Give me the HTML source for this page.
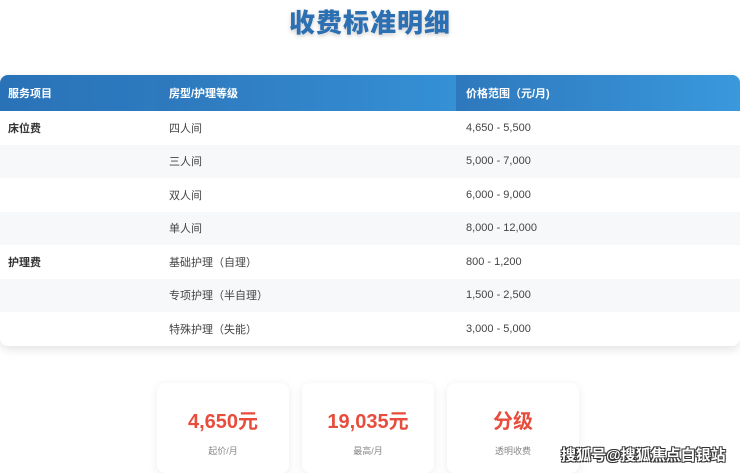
<!DOCTYPE html>
<html><head><meta charset="utf-8"><style>
*{margin:0;padding:0;box-sizing:border-box}
body{width:740px;height:469px;overflow:hidden;background:#fff;font-family:"Liberation Sans","Noto Sans CJK SC",sans-serif;position:relative}
h1{position:absolute;top:3px;left:0;width:740px;text-align:center;font-size:26px;font-weight:900;color:#2d6fb3;text-shadow:0 2px 4px rgba(0,0,0,.2);letter-spacing:1px}
.tbl{position:absolute;top:75px;left:0;width:740px;border-radius:8px;box-shadow:0 3px 10px rgba(0,0,0,.12);overflow:hidden;background:#fff}
.row{display:flex;height:33.5px;align-items:center;font-size:11px;color:#444}
.row.hd{height:36px;background:linear-gradient(90deg,#2a72b8,#3898dc);color:#fff;font-weight:bold;font-size:11px}
.row.hd div:nth-child(2){background:linear-gradient(90deg,#2e78bd,#3590d5)}
.row.hd div:nth-child(3){background:linear-gradient(90deg,#2e78bd,#3a98dc)}
.hd div{height:100%;display:flex;align-items:center}
.c1{width:158px;padding-left:8px;font-weight:bold;color:#333}
.hd .c1{color:#fff}
.c2{width:298px;padding-left:11px}
.c3{flex:1;padding-left:10px}
.card{position:absolute;top:383px;width:132px;height:90px;background:#fff;border-radius:8px;box-shadow:0 2px 10px rgba(0,0,0,.08);text-align:center}
.card b{display:block;margin-top:22px;font-size:20px;color:#e74c3c}
.card span{display:block;margin-top:10px;font-size:9px;color:#888}
.wm{position:absolute;left:561px;top:444px;font-size:15px;color:#fff;font-weight:bold;text-shadow:1px 1px 0 #333,-1px -1px 0 #333,1px -1px 0 #333,-1px 1px 0 #333}
</style></head><body>
<h1>收费标准明细</h1>
<div class="tbl">
<div class="row hd"><div class="c1">服务项目</div><div class="c2">房型/护理等级</div><div class="c3">价格范围（元/月)</div></div>
<div class="row" style="background:#fff"><div class="c1">床位费</div><div class="c2">四人间</div><div class="c3">4,650 - 5,500</div></div>
<div class="row" style="background:#f6f8fa"><div class="c1"></div><div class="c2">三人间</div><div class="c3">5,000 - 7,000</div></div>
<div class="row" style="background:#fff"><div class="c1"></div><div class="c2">双人间</div><div class="c3">6,000 - 9,000</div></div>
<div class="row" style="background:#f6f8fa"><div class="c1"></div><div class="c2">单人间</div><div class="c3">8,000 - 12,000</div></div>
<div class="row" style="background:#fff"><div class="c1">护理费</div><div class="c2">基础护理（自理）</div><div class="c3">800 - 1,200</div></div>
<div class="row" style="background:#f6f8fa"><div class="c1"></div><div class="c2">专项护理（半自理）</div><div class="c3">1,500 - 2,500</div></div>
<div class="row" style="background:#fff"><div class="c1"></div><div class="c2">特殊护理（失能）</div><div class="c3">3,000 - 5,000</div></div>
</div>
<div class="card" style="left:157px"><b>4,650元</b><span>起价/月</span></div>
<div class="card" style="left:302px"><b>19,035元</b><span>最高/月</span></div>
<div class="card" style="left:447px"><b>分级</b><span>透明收费</span></div>
<div class="wm">搜狐号@搜狐焦点白银站</div>
</body></html>
